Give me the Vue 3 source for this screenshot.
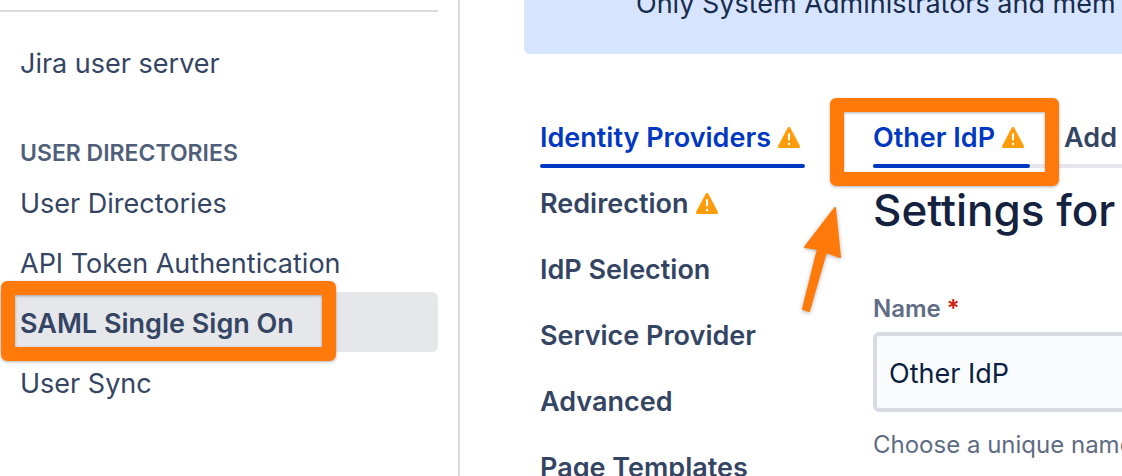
<script setup>
import { ref } from 'vue'

const userLinks = ['User Directories', 'API Token Authentication', 'SAML Single Sign On', 'User Sync']
const activeLink = ref('SAML Single Sign On')

const sections = [
  { label: 'Identity Providers', warning: true },
  { label: 'Redirection', warning: true },
  { label: 'IdP Selection' },
  { label: 'Service Provider' },
  { label: 'Advanced' },
  { label: 'Page Templates' }
]
const activeSection = ref('Identity Providers')

const idpName = ref('Other IdP')
</script>

<template>
  <div class="page">
    <nav class="sidebar">
      <div class="top-group">
        <a href="#" class="side-link">Jira user server</a>
      </div>
      <h4 class="sidebar-heading">USER DIRECTORIES</h4>
      <a
        v-for="link in userLinks"
        :key="link"
        href="#"
        class="side-link"
        :class="{ active: link === activeLink }"
        @click.prevent="activeLink = link"
      >
        {{ link }}
        <span v-if="link === 'SAML Single Sign On'" class="marker marker-side"></span>
      </a>
    </nav>

    <main class="main">
      <div class="banner">Only System Administrators and mem</div>

      <div class="columns">
        <nav class="sections">
          <a
            v-for="s in sections"
            :key="s.label"
            href="#"
            class="tab"
            :class="{ selected: s.label === activeSection }"
            @click.prevent="activeSection = s.label"
          >
            {{ s.label }}
            <svg v-if="s.warning" class="warn" viewBox="0 0 22 21">
              <path d="M11 1.5 20.5 19.5H1.5Z" fill="#ff9c0b" stroke="#ff9c0b" stroke-width="3" stroke-linejoin="round" />
              <path d="M11 7V12.5" stroke="#fff" stroke-width="2" stroke-linecap="round" />
              <circle cx="11" cy="17" r="1.2" fill="#fff" />
            </svg>
          </a>
        </nav>

        <section class="content">
          <div class="tabs">
            <a href="#" class="tab selected">
              Other IdP
              <svg class="warn" viewBox="0 0 22 21">
                <path d="M11 1.5 20.5 19.5H1.5Z" fill="#ff9c0b" stroke="#ff9c0b" stroke-width="3" stroke-linejoin="round" />
                <path d="M11 7V12.5" stroke="#fff" stroke-width="2" stroke-linecap="round" />
                <circle cx="11" cy="17" r="1.2" fill="#fff" />
              </svg>
            </a>
            <a href="#" class="tab">Add</a>
            <span class="marker marker-tab"></span>
            <svg class="arrow" viewBox="0 0 44 112">
              <path
                d="M35 4 40 53 26 48 9 107 3 105 18 45 5 43Z"
                fill="#ff7a0a"
                stroke="#ff7a0a"
                stroke-width="2"
                stroke-linejoin="round"
              />
            </svg>
          </div>

          <h1>Settings for</h1>

          <label for="idp-name">Name <span class="required">*</span></label>
          <input id="idp-name" v-model="idpName" type="text" />
          <p class="hint">Choose a unique name</p>
        </section>
      </div>
    </main>
  </div>
</template>

<style>
body {
  margin: 0;
  overflow: hidden;
}
</style>

<style scoped>
.page {
  display: flex;
  height: 100vh;
  overflow: hidden;
  background: #fff;
  color: #344563;
  font-family: Inter, "Liberation Sans", sans-serif;
  font-size: 27px;
}

a {
  color: inherit;
  text-decoration: none;
}

.sidebar {
  flex: 0 0 438px;
  padding: 10px 20px 0 0;
  border-right: 2px solid #d9dbe4;
}

.top-group {
  border-top: 2px solid #d9dbe4;
  padding-top: 20px;
}

.side-link {
  position: relative;
  display: block;
  padding: 4px 0 0 20px;
  line-height: 56px;
  border-radius: 0 6px 6px 0;
}

.side-link.active {
  background: #e6e7eb;
  font-weight: 600;
}

.sidebar-heading {
  margin: 40px 0 0;
  padding: 2px 0 0 20px;
  line-height: 38px;
  font-size: 23px;
  font-weight: 600;
  color: #505f79;
}

/* Orange callouts */
.marker {
  position: absolute;
  box-sizing: border-box;
  border: 14px solid #ff7a0a;
  border-radius: 6px;
  box-shadow: 0 1px 3px rgba(0, 0, 0, 0.3), inset 0 1px 3px rgba(0, 0, 0, 0.3);
  pointer-events: none;
}

.marker-side {
  top: -11px;
  left: 1px;
  width: 335px;
  height: 80px;
}

.marker-tab {
  top: -4px;
  left: -43px;
  width: 229px;
  height: 88px;
}

.arrow {
  position: absolute;
  top: 102px;
  left: -73px;
  width: 44px;
  height: 112px;
  filter: drop-shadow(0 1px 2px rgba(0, 0, 0, 0.3));
}

.main {
  flex: 1;
  min-width: 0;
  overflow: hidden;
  padding-left: 64px;
}

.banner {
  box-sizing: border-box;
  height: 54px;
  padding-left: 112px;
  line-height: 8px;
  border-radius: 0 0 0 6px;
  background: #d6e4ff;
  color: #172b4d;
  white-space: nowrap;
}

.columns {
  display: flex;
  gap: 68px;
  padding: 48px 0 0 16px;
}

.sections {
  flex: 0 0 265px;
}

.tab {
  position: relative;
  display: flex;
  align-items: center;
  gap: 7px;
  box-sizing: border-box;
  height: 66px;
  padding-top: 4px;
  font-weight: 600;
  white-space: nowrap;
}

.tab.selected {
  color: #0038c2;
}

.tab.selected::after {
  content: "";
  position: absolute;
  right: 0;
  bottom: 0;
  left: 0;
  height: 4px;
  border-radius: 2px;
  background: #0038c2;
}

.warn {
  width: 22px;
  height: 21px;
}

.content {
  flex: 1 0 400px;
}

.tabs {
  position: relative;
  display: flex;
  gap: 34px;
  box-shadow: inset 0 -4px #e6e6ec;
}

.tabs .tab.selected {
  padding-right: 6px;
}

h1 {
  margin: 12px 0 0;
  line-height: 60px;
  font-size: 44px;
  font-weight: 500;
  color: #14213f;
}

label {
  display: block;
  margin-top: 53px;
  line-height: 32px;
  font-size: 24px;
  font-weight: 600;
  color: #5e6c84;
}

.required {
  color: #d1220b;
}

input {
  box-sizing: border-box;
  width: 100%;
  height: 80px;
  margin: 7px 0 0;
  padding: 2px 12px 0;
  border: 4px solid #d9dbe4;
  border-radius: 6px;
  background: #fafbfc;
  color: #091e42;
  font: inherit;
}

.hint {
  margin: 17px 0 0;
  line-height: 32px;
  font-size: 24px;
  color: #5e6c84;
}
</style>
